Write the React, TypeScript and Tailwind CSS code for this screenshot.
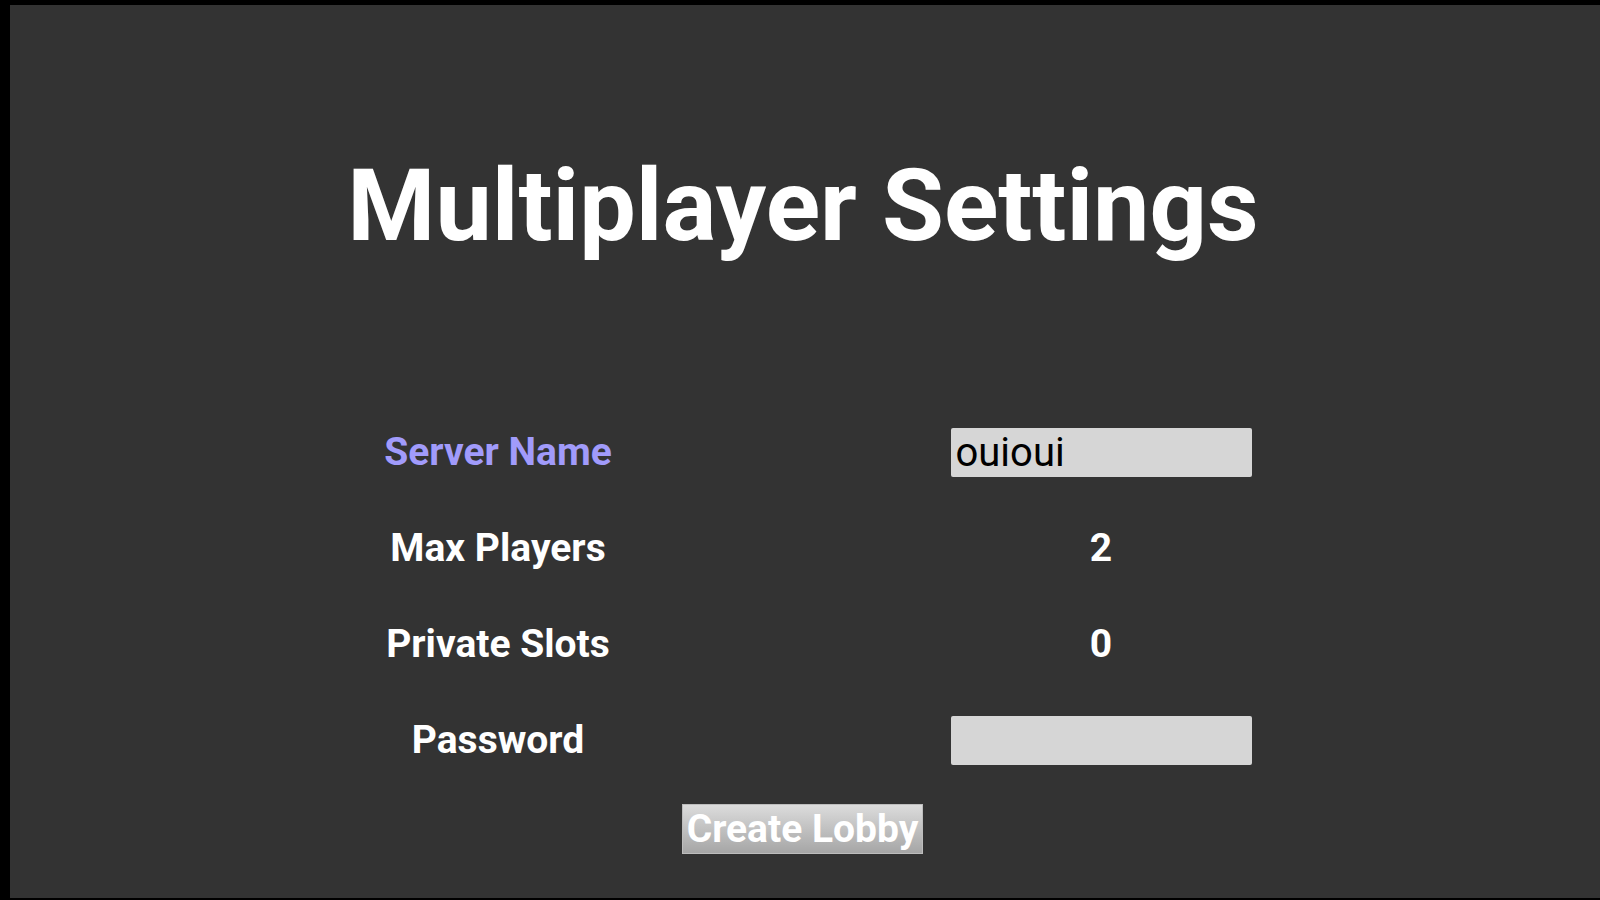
export default function App() {
  const rows: { label: string; kind: 'input' | 'value'; value: string; active?: boolean }[] = [
    { label: 'Server Name', kind: 'input', value: 'ouioui', active: true },
    { label: 'Max Players', kind: 'value', value: '2' },
    { label: 'Private Slots', kind: 'value', value: '0' },
    { label: 'Password', kind: 'input', value: '' },
  ];

  return (
    <div
      className="w-[1600px] h-[900px] bg-black pt-[5px] pl-[10px] pb-[2px] overflow-hidden"
      style={{ fontFamily: 'Roboto, "Liberation Sans", sans-serif' }}
    >
      <div className="h-[893px] bg-[#333333] flex flex-col items-center">
        <h1 className="mt-[151px] mr-[4px] text-[100.7px] leading-[100px] font-bold text-white">
          Multiplayer Settings
        </h1>

        <div className="mt-[148px] w-full flex justify-center pr-[11px]">
          <div className="grid grid-cols-[603px_603px]">
            {rows.map((row) => (
              <div key={row.label} className="contents">
                <div className="h-[96px] flex items-center justify-center">
                  <span
                    className={`text-[39px] leading-[39px] font-bold ${
                      row.active ? 'text-[#a19bfb]' : 'text-white'
                    }`}
                  >
                    {row.label}
                  </span>
                </div>
                <div className="h-[96px] flex items-center justify-center">
                  {row.kind === 'input' ? (
                    <input
                      type="text"
                      defaultValue={row.value}
                      className="w-[301px] h-[49px] rounded-[2px] bg-[#d6d6d6] pl-[5px] text-[40px] leading-[49px] text-black outline-none"
                      style={{ fontFamily: 'Roboto, "Liberation Sans", sans-serif' }}
                    />
                  ) : (
                    <span className="text-[39px] leading-[39px] font-bold text-white">
                      {row.value}
                    </span>
                  )}
                </div>
              </div>
            ))}
          </div>
        </div>

        <button
          className="mt-[16px] mr-[5px] w-[241px] h-[50px] border border-[#bdbdbd] bg-gradient-to-b from-[#dcdcdc] to-[#a6a6a6] text-[39px] leading-[39px] font-bold text-white flex items-center justify-center"
          style={{ fontFamily: 'Roboto, "Liberation Sans", sans-serif' }}
        >
          Create Lobby
        </button>
      </div>
    </div>
  );
}
